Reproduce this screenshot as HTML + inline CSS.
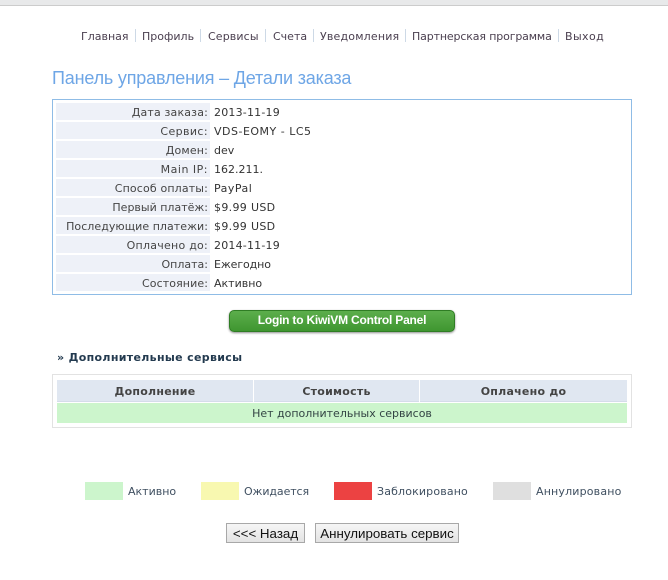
<!DOCTYPE html>
<html><head><meta charset="utf-8">
<style>
html,body{margin:0;padding:0;background:#fff;width:668px;height:580px;overflow:hidden}
body{position:relative;font-family:"DejaVu Sans","Liberation Sans",sans-serif;font-size:11px;color:#333}
div,span.a{position:absolute;box-sizing:border-box}
.t{white-space:nowrap;line-height:14px;height:14px}
.l{left:56px;width:154px;height:17px;background:#eef1f8}
.lt{right:460px;text-align:right;color:#444}
.v{left:214px;color:#333}
.n{top:30px;color:#4a3f4f}
.s{top:29px;width:1px;height:13px;background:#cdd9e6}
.th{top:380px;height:22px;background:#e0e7f1;border-bottom:1px solid #d5dcea;text-align:center;font-weight:bold;line-height:24px;color:#444;white-space:nowrap;letter-spacing:.25px}
.sw{top:482px;width:38px;height:18px}
.lg{top:485px;color:#3f4f60}
.b{top:523px;height:20px;background:linear-gradient(#f6f6f6,#e3e3e3);border:1px solid #a8a8a8;font-family:"Liberation Sans",sans-serif;font-size:13.33px;line-height:20px;text-align:center;color:#111;white-space:nowrap}
</style></head><body>
<div style="left:0;top:0;width:668px;height:6px;background:#e8e9ea;border-bottom:1px solid #ccc"></div>

<div class="t n" style="left:81px">Главная</div><div class="s" style="left:135px"></div>
<div class="t n" style="left:142px">Профиль</div><div class="s" style="left:200px"></div>
<div class="t n" style="left:208px;letter-spacing:.12px">Сервисы</div><div class="s" style="left:265px"></div>
<div class="t n" style="left:273px">Счета</div><div class="s" style="left:313px"></div>
<div class="t n" style="left:320px;letter-spacing:.18px">Уведомления</div><div class="s" style="left:405px"></div>
<div class="t n" style="left:412px;letter-spacing:-.14px">Партнерская программа</div><div class="s" style="left:558px"></div>
<div class="t n" style="left:565px;letter-spacing:.4px">Выход</div>

<div class="t" style="left:52px;top:68px;height:20px;line-height:20px;font-family:'Liberation Sans',sans-serif;font-size:18px;letter-spacing:-.18px;color:#6ea6e6">Панель управления – Детали заказа</div>

<div style="left:52px;top:99px;width:580px;height:196px;border:1px solid #8fbce6"></div>
<div class="l" style="top:103px"></div><div class="t lt" style="top:106px;letter-spacing:.17px">Дата заказа:</div><div class="t v" style="top:106px;letter-spacing:.2px">2013-11-19</div>
<div class="l" style="top:122px"></div><div class="t lt" style="top:125px;letter-spacing:.4px">Сервис:</div><div class="t v" style="top:125px;letter-spacing:.5px">VDS-EOMY - LC5</div>
<div class="l" style="top:141px"></div><div class="t lt" style="top:144px;letter-spacing:.15px">Домен:</div><div class="t v" style="top:144px">dev</div>
<div class="l" style="top:160px"></div><div class="t lt" style="top:163px;letter-spacing:.5px">Main IP:</div><div class="t v" style="top:163px">162.211.</div>
<div class="l" style="top:179px"></div><div class="t lt" style="top:182px;letter-spacing:.15px">Способ оплаты:</div><div class="t v" style="top:182px;letter-spacing:.5px">PayPal</div>
<div class="l" style="top:198px"></div><div class="t lt" style="top:201px">Первый платёж:</div><div class="t v" style="top:201px;letter-spacing:.33px">$9.99 USD</div>
<div class="l" style="top:217px"></div><div class="t lt" style="top:220px;letter-spacing:.05px">Последующие платежи:</div><div class="t v" style="top:220px;letter-spacing:.33px">$9.99 USD</div>
<div class="l" style="top:236px"></div><div class="t lt" style="top:239px;letter-spacing:.25px">Оплачено до:</div><div class="t v" style="top:239px;letter-spacing:.2px">2014-11-19</div>
<div class="l" style="top:255px"></div><div class="t lt" style="top:258px">Оплата:</div><div class="t v" style="top:258px;letter-spacing:-.1px">Ежегодно</div>
<div class="l" style="top:274px"></div><div class="t lt" style="top:277px;letter-spacing:.1px">Состояние:</div><div class="t v" style="top:277px">Активно</div>

<div style="left:229px;top:310px;width:226px;height:22px;border-radius:5px;background:linear-gradient(#5cae4c,#3f9630);border:1px solid #2f7d24;box-shadow:0 1px 2px rgba(0,0,0,.45);color:#fff;font-family:'Liberation Sans',sans-serif;font-weight:bold;font-size:12px;letter-spacing:-.21px;line-height:19px;text-align:center;white-space:nowrap">Login to KiwiVM Control Panel</div>

<div class="t" style="left:57px;top:351px;font-weight:bold;letter-spacing:.33px;color:#233a4f">» Дополнительные сервисы</div>

<div style="left:52px;top:374px;width:580px;height:54px;border:1px solid #e2e2e2"></div>
<div class="th" style="left:57px;width:196px">Дополнение</div>
<div class="th" style="left:254px;width:165px">Стоимость</div>
<div class="th" style="left:420px;width:207px">Оплачено до</div>
<div style="left:57px;top:403px;width:570px;height:20px;background:#ccf5cc;text-align:center;line-height:22px;color:#344;white-space:nowrap">Нет дополнительных сервисов</div>

<div class="sw" style="left:85px;background:#ccf5cc"></div><div class="t lg" style="left:128px">Активно</div>
<div class="sw" style="left:201px;background:#f8f8b0"></div><div class="t lg" style="left:244px;letter-spacing:-.1px">Ожидается</div>
<div class="sw" style="left:334px;background:#ec4242"></div><div class="t lg" style="left:377px;letter-spacing:.15px">Заблокировано</div>
<div class="sw" style="left:493px;background:#dfdfdf"></div><div class="t lg" style="left:536px;letter-spacing:.17px">Аннулировано</div>

<div class="b" style="left:226px;width:79px">&lt;&lt;&lt; Назад</div>
<div class="b" style="left:315px;width:144px">Аннулировать сервис</div>
</body></html>
